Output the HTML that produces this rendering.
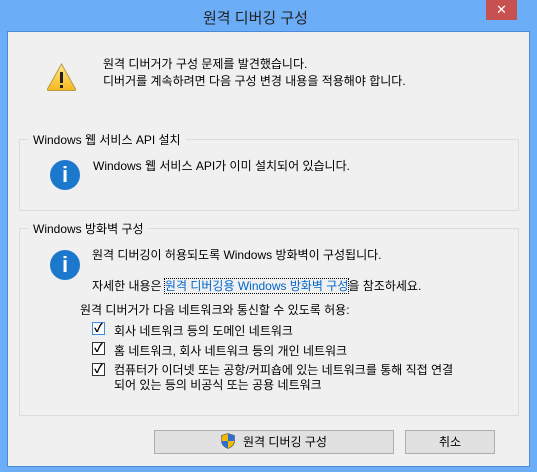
<!DOCTYPE html>
<html><head><meta charset="utf-8"><style>
*{margin:0;padding:0;box-sizing:border-box}
body{width:537px;height:472px;background:#6badf6;position:relative;overflow:hidden;font-family:"Liberation Sans","Noto Sans CJK KR","NanumGothic",sans-serif;font-size:12px;color:#000}
.a{position:absolute;white-space:nowrap}
#title{left:203px;top:7px;font-size:15px;color:#222}
#close{left:486px;top:0;width:31px;height:20px;background:#c75050;color:#fff;text-align:center;font-size:13px;line-height:20px}
#client{left:7px;top:31px;width:523px;height:436px;background:#f0f0f0;border:1px solid #4a8ad8}
.grp{position:absolute;border:1px solid #dcdcdc}
.gt{position:absolute;background:#f0f0f0;padding:0 5px;top:-9px}
.ico{position:absolute;width:30px;height:30px;border-radius:50%;background:#1c78cc;color:#fff;font:bold 22px/30px "Liberation Sans",sans-serif;text-align:center}
.cb{position:absolute;width:13px;height:13px;border:1px solid #333;background:#fff;font-size:12px;line-height:11px;text-align:center;font-weight:bold}
.btn{position:absolute;height:24px;border:1px solid #adadad;background:#e1e1e1;text-align:center;line-height:22px;font-size:12px}
a{color:#0066cc;text-decoration:none;outline:1px dotted #000}
</style></head><body>
<div class="a" id="title">원격 디버깅 구성</div>
<div class="a" id="close">✕</div>
<div class="a" id="client"></div>
<svg class="a" style="left:46px;top:62px" width="31" height="30" viewBox="0 0 31 30"><defs><linearGradient id="g" x1="0" y1="0" x2="0" y2="1"><stop offset="0" stop-color="#ffe98a"/><stop offset="1" stop-color="#f5b81d"/></linearGradient></defs><path d="M15.5 2 L29.5 27 Q30 28.5 28.5 28.5 L2.5 28.5 Q1 28.5 1.5 27 Z" fill="url(#g)" stroke="#b59a4c" stroke-width="1"/><rect x="14" y="10" width="3" height="11" fill="#222"/><rect x="14" y="23" width="3" height="3" fill="#222"/></svg>
<div class="a" style="left:103px;top:56px;line-height:17px">원격 디버거가 구성 문제를 발견했습니다.<br>디버거를 계속하려면 다음 구성 변경 내용을 적용해야 합니다.</div>

<div class="grp" style="left:19px;top:139px;width:500px;height:72px"><div class="gt" style="left:8px">Windows 웹 서비스 API 설치</div></div>
<div class="ico" style="left:50px;top:160px">i</div>
<div class="a" style="left:93px;top:157px">Windows 웹 서비스 API가 이미 설치되어 있습니다.</div>

<div class="grp" style="left:19px;top:228px;width:500px;height:188px"><div class="gt" style="left:8px">Windows 방화벽 구성</div></div>
<div class="ico" style="left:50px;top:250px">i</div>
<div class="a" style="left:92px;top:246px">원격 디버깅이 허용되도록 Windows 방화벽이 구성됩니다.</div>
<div class="a" style="left:92px;top:277px">자세한 내용은 <a>원격 디버깅용 Windows 방화벽 구성</a>을 참조하세요.</div>
<div class="a" style="left:80px;top:301px">원격 디버거가 다음 네트워크와 통신할 수 있도록 허용:</div>
<div class="cb" style="left:92px;top:322px;border-color:#3c8fe0">✓</div>
<div class="a" style="left:114px;top:322px">회사 네트워크 등의 도메인 네트워크</div>
<div class="cb" style="left:92px;top:342px">✓</div>
<div class="a" style="left:114px;top:342px">홈 네트워크, 회사 네트워크 등의 개인 네트워크</div>
<div class="cb" style="left:92px;top:363px">✓</div>
<div class="a" style="left:114px;top:363px;line-height:15px">컴퓨터가 이더넷 또는 공항/커피숍에 있는 네트워크를 통해 직접 연결<br>되어 있는 등의 비공식 또는 공용 네트워크</div>

<div class="btn" style="left:154px;top:430px;width:240px"><svg style="vertical-align:-3px;margin-right:8px" width="14" height="16" viewBox="0 0 14 16"><path d="M7 0.5 L13.5 2.5 V8 Q13.5 13 7 15.5 Q0.5 13 0.5 8 V2.5 Z" fill="#f2b900" stroke="#555" stroke-width="0.6"/><path d="M7 0.5 L13.5 2.5 V8 H7 Z" fill="#2c6fd0"/><path d="M7 8 H0.5 Q0.5 13 7 15.5 Z" fill="#2c6fd0"/></svg>원격 디버깅 구성</div>
<div class="btn" style="left:405px;top:430px;width:90px">취소</div>
</body></html>
